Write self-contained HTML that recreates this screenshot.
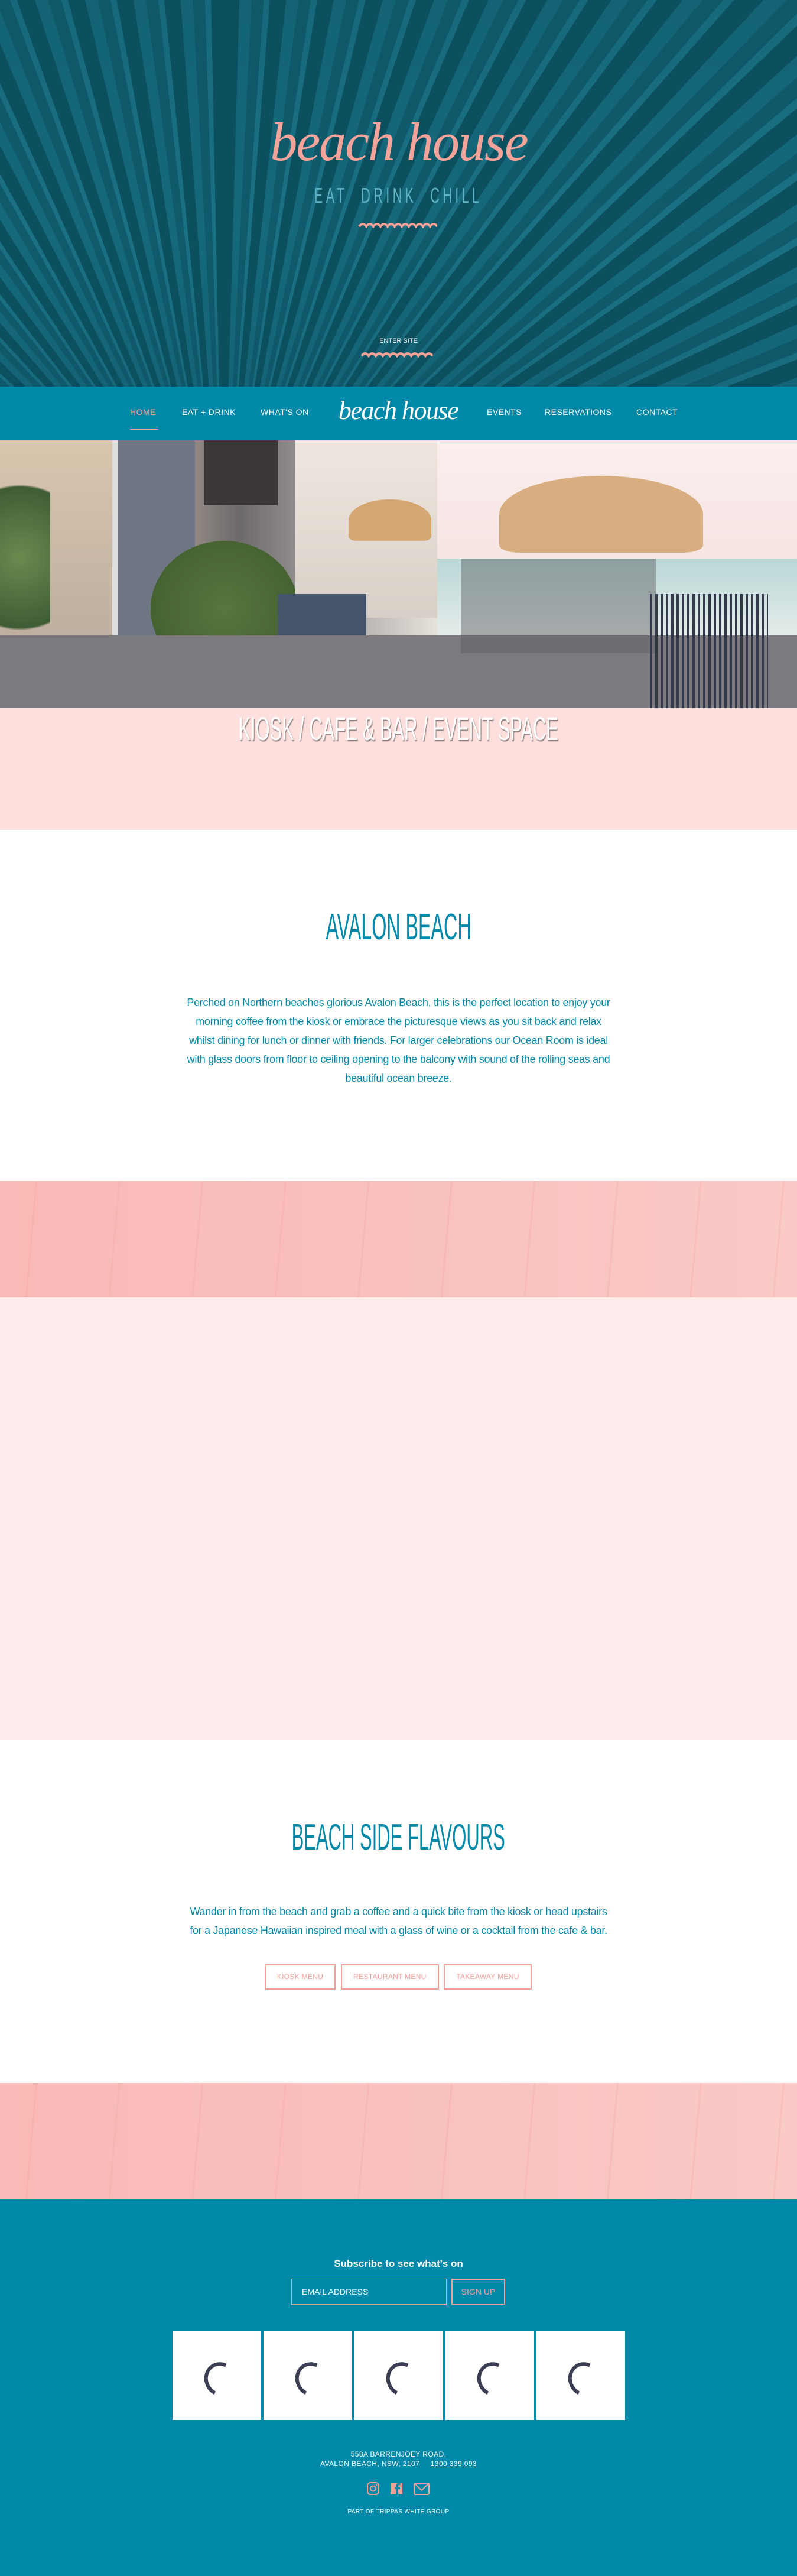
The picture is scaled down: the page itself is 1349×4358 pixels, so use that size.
<!DOCTYPE html>
<html><head><meta charset="utf-8"><style>
*{margin:0;padding:0;box-sizing:border-box}
body{width:1349px;height:4358px;position:relative;background:#fff;font-family:"Liberation Sans",sans-serif;overflow:hidden}
.abs{position:absolute}
.hero{left:0;top:0;width:1349px;height:654px;background:
 repeating-conic-gradient(from 0deg at 28% 150%,#0c4f5f 0deg 1.6deg,#15697b 1.6deg 2.8deg,#0f5a6b 2.8deg 4deg,#1a7183 4deg 4.6deg);}
.hero:after{content:"";position:absolute;inset:0;background:linear-gradient(180deg,rgba(12,80,96,.25),rgba(12,80,96,0) 60%,rgba(12,80,96,.2))}
.script{font-family:"Liberation Serif",cursive;font-style:italic;color:#f4a39a;font-weight:300;white-space:nowrap}
.cond{font-family:"Liberation Sans Narrow","Liberation Sans",sans-serif;display:inline-block;transform:scaleX(.62);transform-origin:center}
.nav{left:0;top:654px;width:1349px;height:91px;background:#0089a8}
.nav span{position:absolute;top:35px;color:#fff;font-size:14px;letter-spacing:.5px}
.photo{left:0;top:745px;width:1349px;height:453px;overflow:hidden;background:linear-gradient(90deg,#c8b7a5 0,#b9ab9c 18%,#6d6a6c 30%,#e8e2dc 55%,#f7ede9 70%,#f9eeee 100%)}
.sec-pink{left:0;top:1198px;width:1349px;height:206px;background:#fddfdd}
.leaf{left:0;width:1349px;height:197px;background:
 repeating-linear-gradient(95deg,rgba(246,160,156,0) 0 60px,rgba(246,160,156,.25) 60px 63px,rgba(246,160,156,0) 63px 140px),
 linear-gradient(90deg,#f9b9b6,#f9c2bf 60%,#f9cac6)}
.h2{left:0;width:1349px;text-align:center;color:#0089a8;font-size:62px;font-weight:400}
.p{color:#0089a8;font-size:18px;text-align:center;line-height:32px;letter-spacing:-.3px;white-space:nowrap}
.btn{position:absolute;top:3323px;height:43px;border:2px solid #f4a09a;color:#f4a09a;font-size:12px;text-align:center;line-height:39px;letter-spacing:.3px}
.foot{left:0;top:3721px;width:1349px;height:637px;background:#0089a8}
.tile{position:absolute;top:3944px;width:150px;height:150px;background:#fff}
.tile:after{content:"";position:absolute;left:54px;top:52px;width:42px;height:46px;border-radius:50%;border:6px solid #3b3d52;border-right-color:transparent;border-bottom-color:transparent;transform:rotate(-20deg)}
</style></head><body>
<div class="abs hero"></div>
<div class="abs script" style="left:375px;top:190px;width:600px;text-align:center;font-size:92px;line-height:100px;letter-spacing:-2px">beach house</div>
<div class="abs" style="left:0;top:310px;width:1349px;text-align:center;color:#5fb3c6;font-size:36px;letter-spacing:9px"><span class="cond" style="transform:scaleX(.6)">EAT&nbsp;&nbsp;DRINK&nbsp;&nbsp;CHILL</span></div>
<svg class="abs" style="left:606px;top:369px" width="134" height="18"><path d="M2 14 q6-8 12 0 q6-8 12 0 q6-8 12 0 q6-8 12 0 q6-8 12 0 q6-8 12 0 q6-8 12 0 q6-8 12 0 q6-8 12 0 q6-8 12 0 q6-8 12 0" fill="none" stroke="#f4a39a" stroke-width="4"/></svg>
<div class="abs" style="left:0;top:571px;width:1349px;text-align:center;color:#fff;font-size:11px">ENTER SITE</div>
<svg class="abs" style="left:610px;top:590px" width="130" height="16"><path d="M2 12 q6-8 12 0 q6-8 12 0 q6-8 12 0 q6-8 12 0 q6-8 12 0 q6-8 12 0 q6-8 12 0 q6-8 12 0 q6-8 12 0 q6-8 12 0" fill="none" stroke="#f4a39a" stroke-width="4"/></svg>

<div class="abs nav">
<span style="left:220px;color:#f4a39a">HOME</span>
<div class="abs" style="left:220px;top:72px;width:47px;height:1px;background:#f4a39a"></div>
<span style="left:308px">EAT + DRINK</span>
<span style="left:441px">WHAT'S ON</span>
<div class="abs script" style="left:564px;top:14px;width:220px;text-align:center;color:#fff;font-size:44px;line-height:54px;letter-spacing:-1.5px">beach house</div>
<span style="left:824px">EVENTS</span>
<span style="left:922px">RESERVATIONS</span>
<span style="left:1077px">CONTACT</span>
</div>

<div class="abs photo">
 <div class="abs" style="left:0;top:0;width:230px;height:453px;background:linear-gradient(180deg,#d9c6ae,#b5a69a)"></div>
 <div class="abs" style="left:0;top:70px;width:85px;height:320px;background:radial-gradient(circle at 40% 40%,#6b8a4f,#3f5c35 60%,transparent 62%)"></div>
 <div class="abs" style="left:190px;top:0;width:140px;height:400px;background:#6f7683;border-left:10px solid #ddd"></div>
 <div class="abs" style="left:345px;top:0;width:125px;height:110px;background:#3a3638"></div>
 <div class="abs" style="left:255px;top:170px;width:250px;height:230px;border-radius:50%;background:radial-gradient(circle,#58763f,#3e5a2c)"></div>
 <div class="abs" style="left:290px;top:375px;width:150px;height:170px;background:#8e98a8"></div>
 <div class="abs" style="left:500px;top:0;width:240px;height:300px;background:linear-gradient(180deg,#efe7df,#d8cfc7)"></div>
 <div class="abs" style="left:470px;top:260px;width:150px;height:160px;background:#45566a"></div>
 <div class="abs" style="left:740px;top:0;width:620px;height:200px;background:linear-gradient(180deg,#fbeeee,#f6e5e3)"></div>
 <div class="abs" style="left:740px;top:200px;width:620px;height:130px;background:linear-gradient(180deg,#b9d7d6,#e5ecea)"></div>
 <div class="abs" style="left:0;top:330px;width:1349px;height:123px;background:#7c7a7e"></div>
 <div class="abs" style="left:845px;top:60px;width:345px;height:130px;border-radius:50% 50% 10% 10%;background:#d8ad7f"></div>
 <div class="abs" style="left:590px;top:100px;width:140px;height:70px;border-radius:50% 50% 10% 10%;background:#d5a572"></div>
 <div class="abs" style="left:780px;top:200px;width:330px;height:160px;background:rgba(90,90,95,.45)"></div>
 <div class="abs" style="left:1100px;top:260px;width:200px;height:193px;background:repeating-linear-gradient(90deg,#33384a 0 4px,transparent 4px 9px)"></div>
</div>
<div class="abs sec-pink"></div>
<div class="abs" style="left:0;top:1200px;width:1349px;text-align:center;color:#fff;font-size:56px;text-shadow:2px 2px 2px rgba(0,0,0,.45)"><span class="cond" style="transform:scaleX(.55)">KIOSK / CAFE &amp; BAR / EVENT SPACE</span></div>

<div class="abs h2" style="top:1533px"><span class="cond" style="transform:scaleX(.52)">AVALON BEACH</span></div>
<div class="abs p" style="left:0;top:1680px;width:1349px">Perched on Northern beaches glorious Avalon Beach, this is the perfect location to enjoy your<br>morning coffee from the kiosk or embrace the picturesque views as you sit back and relax<br>whilst dining for lunch or dinner with friends. For larger celebrations our Ocean Room is ideal<br>with glass doors from floor to ceiling opening to the balcony with sound of the rolling seas and<br>beautiful ocean breeze.</div>

<div class="abs leaf" style="top:1998px"></div>
<div class="abs" style="left:0;top:2195px;width:1349px;height:749px;background:#feecec"></div>

<div class="abs h2" style="top:3073px"><span class="cond" style="transform:scaleX(.5)">BEACH SIDE FLAVOURS</span></div>
<div class="abs p" style="left:0;top:3218px;width:1349px">Wander in from the beach and grab a coffee and a quick bite from the kiosk or head upstairs<br>for a Japanese Hawaiian inspired meal with a glass of wine or a cocktail from the cafe &amp; bar.</div>
<div class="btn" style="left:448px;width:120px">KIOSK MENU</div>
<div class="btn" style="left:577px;width:166px">RESTAURANT MENU</div>
<div class="btn" style="left:751px;width:149px">TAKEAWAY MENU</div>

<div class="abs leaf" style="top:3524px"></div>
<div class="abs foot"></div>
<div class="abs" style="left:0;top:3820px;width:1349px;text-align:center;color:#fff;font-size:17px;font-weight:bold">Subscribe to see what's on</div>
<div class="abs" style="left:493px;top:3855px;width:263px;height:44px;border:1px solid #f4a09a;color:#fff;font-size:14px;padding:13px 0 0 17px">EMAIL ADDRESS</div>
<div class="abs" style="left:764px;top:3855px;width:91px;height:44px;border:2px solid #f4a09a;color:#f4a09a;font-size:14px;text-align:center;line-height:40px">SIGN UP</div>
<div class="tile" style="left:292px"></div>
<div class="tile" style="left:446px"></div>
<div class="tile" style="left:600px"></div>
<div class="tile" style="left:754px"></div>
<div class="tile" style="left:908px"></div>
<div class="abs" style="left:0;top:4144px;width:1349px;text-align:center;color:#fff;font-size:12px;line-height:16px;letter-spacing:.4px">558A BARRENJOEY ROAD,<br>AVALON BEACH, NSW, 2107 &nbsp;&nbsp;&nbsp; <span style="border-bottom:1px solid #fff">1300 339 093</span></div>
<svg class="abs" style="left:620px;top:4198px" width="110" height="24">
<rect x="2" y="2" width="19" height="20" rx="5" fill="none" stroke="#f4a09a" stroke-width="2"/><circle cx="11.5" cy="12" r="4.5" fill="none" stroke="#f4a09a" stroke-width="2"/><circle cx="17" cy="6" r="1.2" fill="#f4a09a"/>
<rect x="41" y="2" width="20" height="20" fill="#f4a09a"/><path d="M54 22 V13 h3 v-3 h-3 v-2 q0-2 2-2 h1.5 v-3 h-3 q-4 0-4 4 v3 h-2 v3 h2 v9z" fill="#0089a8"/>
<rect x="81" y="3" width="25" height="19" rx="2" fill="none" stroke="#f4a09a" stroke-width="2"/><path d="M82 4 L93.5 15 L105 4" fill="none" stroke="#f4a09a" stroke-width="2"/>
</svg>
<div class="abs" style="left:0;top:4244px;width:1349px;text-align:center;color:#fff;font-size:10px;letter-spacing:.4px">PART OF TRIPPAS WHITE GROUP</div>
</body></html>
